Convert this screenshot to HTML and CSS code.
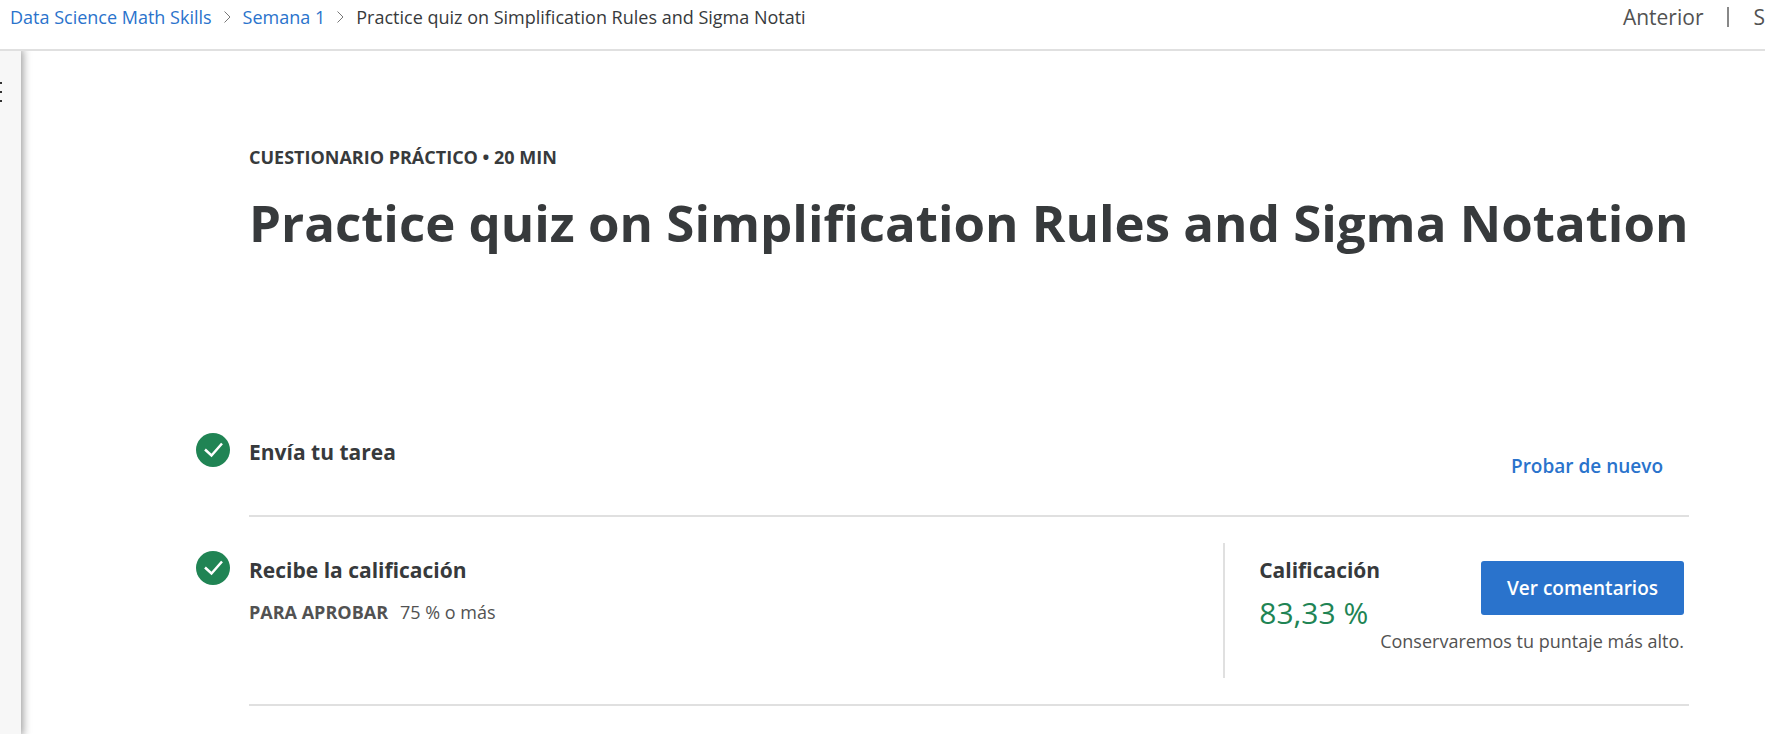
FILE: index.html
```html
<!DOCTYPE html>
<html lang="es">
<head>
<meta charset="utf-8">
<title>Practice quiz on Simplification Rules and Sigma Notation</title>
<link rel="stylesheet" href="styles.css">
</head>
<body>
<header class="topbar">
  <nav class="breadcrumbs">
    <a class="crumb" href="#">Data Science Math Skills</a>
    <svg class="chevron" viewBox="0 0 7 12"><path d="M.5 .5 6 6 .5 11.500"/></svg>
    <a class="crumb" href="#">Semana 1</a>
    <svg class="chevron" viewBox="0 0 7 12"><path d="M.5 .5 6 6 .5 11.500"/></svg>
    <span class="crumb-current">Practice quiz on Simplification Rules and Sigma Notati</span>
  </nav>
  <nav class="pager">
    <a class="pager-link" href="#">Anterior</a>
    <span class="pager-divider"></span>
    <a class="pager-link" href="#">S</a>
  </nav>
</header>
<div class="layout">
  <aside class="sidebar">
    <button class="menu-button" type="button" aria-label="Menú">
      <svg class="menu-icon" viewBox="0 0 2 22"><path d="M0 2h2M0 11h2M0 20h2"/></svg>
    </button>
  </aside>
  <main class="content">
    <div class="intro">
      <p class="kind">CUESTIONARIO PRÁCTICO • 20 MIN</p>
      <h1 class="title">Practice quiz on Simplification Rules and Sigma Notation</h1>
    </div>
    <section class="step">
      <svg class="check" viewBox="0 0 34 34"><circle cx="17" cy="17" r="17"/><path d="M9 16.500 15.500 22.500 26 10.500"/></svg>
      <div class="step-body step-submit">
        <h2 class="step-title">Envía tu tarea</h2>
        <button class="retry" type="button">Probar de nuevo</button>
      </div>
    </section>
    <section class="step">
      <svg class="check" viewBox="0 0 34 34"><circle cx="17" cy="17" r="17"/><path d="M9 16.500 15.500 22.500 26 10.500"/></svg>
      <div class="step-body step-grade">
        <div class="requirement">
          <h2 class="step-title">Recibe la calificación</h2>
          <p class="pass"><strong class="pass-label">PARA APROBAR</strong><span>75 % o más</span></p>
        </div>
        <div class="grade">
          <div class="score">
            <h2 class="step-title">Calificación</h2>
            <p class="score-value">83,33 %</p>
          </div>
          <div class="feedback">
            <button class="primary" type="button">Ver comentarios</button>
            <p class="note">Conservaremos tu puntaje más alto.</p>
          </div>
        </div>
      </div>
    </section>
  </main>
</div>
</body>
</html>
```
FILE: styles.css
```css
* {
  box-sizing: border-box;
}

body {
  display: flex;
  flex-direction: column;
  min-height: 100vh;
  margin: 0;
  background: #fff;
  color: #373a3c;
  font-family: "Open Sans", "Noto Sans", sans-serif;
  font-size: 18px;
  line-height: 24px;
}

h1, h2, p {
  margin: 0;
}

button {
  border: 0;
  font: inherit;
  cursor: pointer;
}

.topbar {
  display: flex;
  justify-content: space-between;
  padding: 5px 0 20px 10px;
  border-bottom: 2px solid #e0e0e0;
}

.breadcrumbs {
  display: flex;
  align-items: center;
  gap: 12px;
  white-space: nowrap;
}

.crumb {
  color: #2a73cc;
  text-decoration: none;
}

.chevron {
  width: 7px;
  height: 12px;
  fill: none;
  stroke: #777;
}

.pager {
  display: flex;
  align-items: center;
  gap: 24px;
  font-size: 21px;
}

.pager-link {
  color: #525252;
  text-decoration: none;
}

.pager-divider {
  flex: none;
  width: 2px;
  height: 20px;
  background: #888;
}

.layout {
  display: flex;
  flex: 1;
  overflow: hidden;
}

.sidebar {
  width: 21px;
  padding-top: 30px;
  background: #f7f7f7;
  box-shadow: 0 0 8px 2px rgba(0, 0, 0, 0.4);
}

.menu-button {
  display: block;
  padding: 0;
  background: none;
}

.menu-icon {
  display: block;
  width: 2px;
  height: 22px;
  stroke: #333;
  stroke-width: 2;
}

.content {
  flex: 1;
  padding: 94px 76px 0 175px;
}

.intro {
  padding: 0 0 143px 53px;
}

.kind {
  font-weight: 700;
}

.title {
  margin-top: 19px;
  font-size: 51px;
  line-height: 68px;
  white-space: nowrap;
}

.step {
  display: grid;
  grid-template-columns: 34px 1fr;
  column-gap: 19px;
  align-items: start;
}

.check {
  width: 34px;
  height: 34px;
  margin-top: 34px;
  fill: #208454;
}

.check path {
  fill: none;
  stroke: #fff;
  stroke-width: 2.500;
}

.step-body {
  display: flex;
  justify-content: space-between;
  border-bottom: 2px solid #e0e0e0;
}

.step-title {
  font-size: 21px;
  font-weight: 700;
  line-height: 28px;
}

.step-submit {
  padding: 39px 26px 35px 0;
}

.retry {
  margin-top: 14px;
  padding: 0;
  background: none;
  color: #2a73cc;
  font-size: 19px;
  font-weight: 600;
  line-height: 28px;
}

.step-grade {
  padding: 26px 5px 26px 0;
}

.requirement {
  padding-top: 13px;
}

.pass {
  display: flex;
  gap: 12px;
  margin-top: 16px;
  color: #525252;
}

.pass-label {
  font-weight: 700;
}

.grade {
  display: flex;
  min-height: 135px;
  padding-left: 34px;
  border-left: 2px solid #e0e0e0;
}

.score {
  padding-top: 13px;
}

.score-value {
  margin-top: 11px;
  color: #208454;
  font-size: 30px;
  line-height: 36px;
}

.feedback {
  display: flex;
  flex-direction: column;
  align-items: flex-end;
  padding-top: 18px;
}

.primary {
  padding: 13px 26px;
  border-radius: 3px;
  background: #2a73cc;
  color: #fff;
  font-size: 19px;
  font-weight: 600;
  line-height: 28px;
}

.note {
  margin-top: 14px;
  color: #525252;
}
```
